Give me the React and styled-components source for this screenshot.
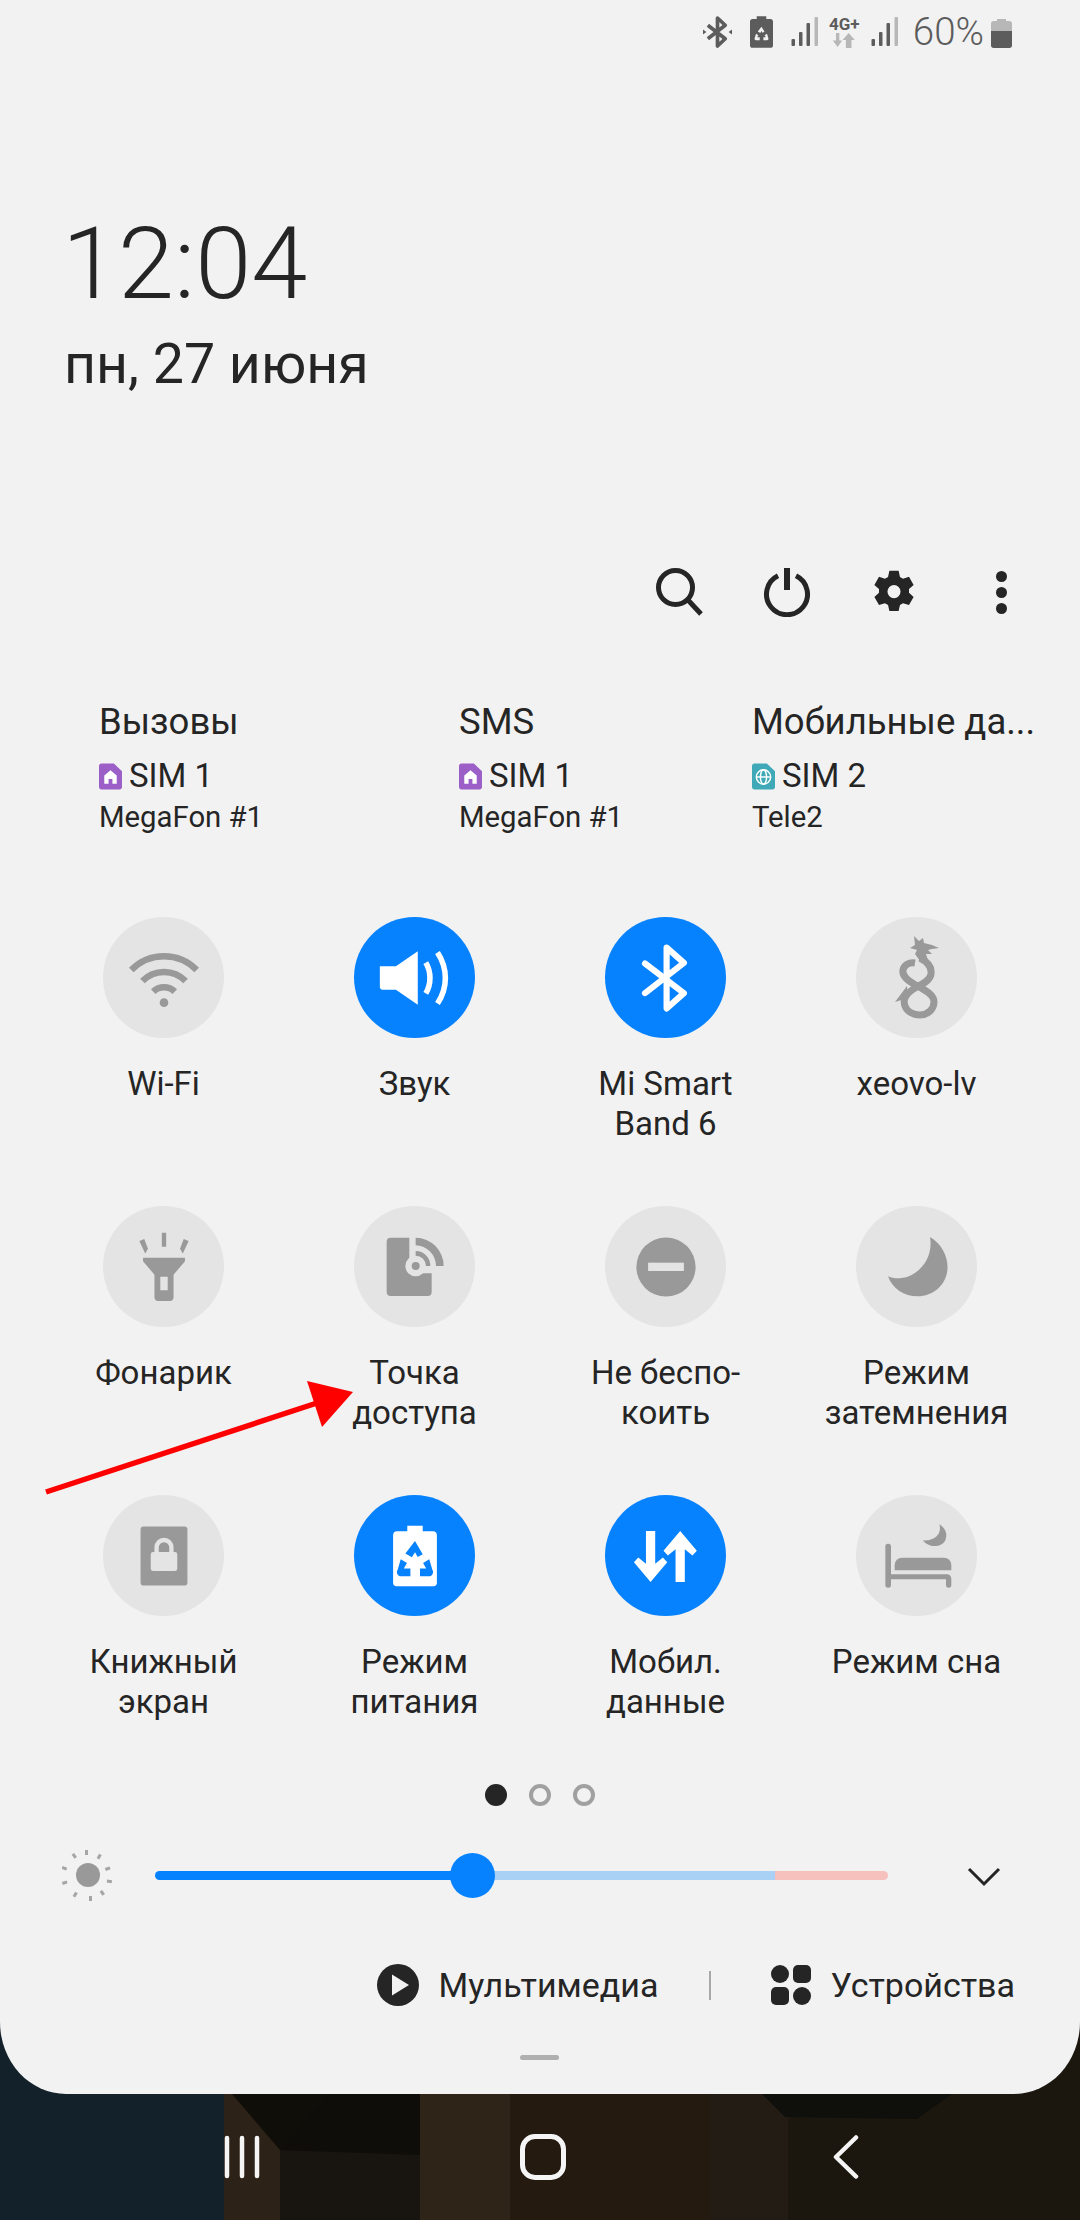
import React from 'react';
import styled, { createGlobalStyle } from 'styled-components';

const GlobalStyle = createGlobalStyle`
  html, body {
    margin: 0;
    padding: 0;
    background: #14120d;
  }
  body {
    font-family: Roboto, "Noto Sans", sans-serif;
    color: #252525;
  }
`;

const Recycle = ({ fill, transform }) => (
  <g fill={fill} transform={transform}>
    <path d="M12 7.500l2 3.400-1.300.7L12 10.400l-.8 1.300-1.700-1z" />
    <path d="M8.300 12.200l1.600 1-.8 1.400h1.700v2H8.400c-.9 0-1.400-1-.9-1.700z" />
    <path d="M15.700 12.200l-1.600 1 .8 1.400h-1.600v2h2.300c.9 0 1.400-1 .9-1.700z" />
  </g>
);

const tiles = [
  {
    lines: ['Wi-Fi'],
    icon: (
      <svg width="74" height="74" viewBox="0 0 24 24" fill="none" stroke="#999" strokeWidth="2.100">
        <path d="M1.400 9.400a14.800 14.800 0 0 1 21.200 0" />
        <path d="M5 13a9.800 9.800 0 0 1 14 0" />
        <path d="M8.500 16.400a5 5 0 0 1 7 0" />
        <circle cx="12" cy="20" r="1.400" fill="#999" stroke="none" />
      </svg>
    ),
  },
  {
    lines: ['Звук'],
    on: true,
    icon: (
      <svg width="74" height="74" viewBox="0 0 24 24" fill="none" stroke="#fff" strokeWidth="1.800">
        <path d="M.6 8.200H5.800l7.100-4.900v17.400L5.800 15.800H1.500c-.5 0-.9-.4-.9-.9z" fill="#fff" stroke="none" />
        <path d="M15.500 7c1.800 3 1.800 7 0 10" />
        <path d="M19.300 3.700c3.400 5.200 3.400 11.400 0 16.600" />
      </svg>
    ),
  },
  {
    lines: ['Mi Smart', 'Band 6'],
    on: true,
    icon: (
      <svg width="74" height="74" viewBox="0 0 24 24" fill="none" stroke="#fff" strokeWidth="2" strokeLinecap="round" strokeLinejoin="round">
        <path d="M5.200 7.300l12.600 9.600-5.600 5V2.100l5.600 5L5.200 16.900" />
      </svg>
    ),
  },
  {
    lines: ['xeovo-lv'],
    icon: (
      <svg width="44" height="83" viewBox="0 0 44 83">
        <path d="M19 0L24 5 28 2 29 7 37 9 44 12 37 13 33 14 37 18 31 18 33 24 25 25 20 18 22 14 15 12 20 9z" fill="#999" />
        <path d="M25 22C33 26 37 31 36 38C35 46 24 49 17 54C10 59 8 65 10 70C12 76 19 79 25 79C33 79 39 73 39 66C39 58 28 53 19 48C12 44 7 40 8 34C9 29 14 26 20 27" fill="none" stroke="#999" strokeWidth="7" />
        <path d="M12 50L0 66 13 62z" fill="#999" />
      </svg>
    ),
  },
  {
    lines: ['Фонарик'],
    icon: (
      <svg width="74" height="74" viewBox="0 0 24 24" fill="#999">
        <path d="M11.300 .9h1.400v4.500h-1.400zM4 3.600l1.600-.7 1.200 3.200-.9 1.500zM20 3.600l-1.600-.7-1.200 3.200.9 1.500z" />
        <path fillRule="evenodd" d="M5.200 9h13.600v1.100L15.100 14.500v7.300c0 .7-.5 1.200-1.100 1.200h-4c-.6 0-1.100-.5-1.100-1.200v-7.300L5.200 10.100zM10.800 15.200v4.300h2.400v-4.300z" />
      </svg>
    ),
  },
  {
    lines: ['Точка', 'доступа'],
    icon: (
      <svg width="60" height="62" viewBox="140 110 180 186" fill="#999">
        <path d="M157 115H213V222H280V278a12 12 0 0 1-12 12H157a12 12 0 0 1-12-12V127a12 12 0 0 1 12-12z" />
        <path d="M232 115a85 85 0 0 1 84 85h-23a62 62 0 0 0-61-62z" />
        <path d="M232 155a44 44 0 0 1 44 45h-21a22 22 0 0 0-23-23z" />
        <circle cx="232" cy="200" r="31" fill="#e4e4e4" />
        <circle cx="232" cy="200" r="12" />
      </svg>
    ),
  },
  {
    lines: ['Не беспо-', 'коить'],
    icon: (
      <svg width="74" height="74" viewBox="0 0 24 24">
        <circle cx="12" cy="12" r="9.600" fill="#999" />
        <rect x="6.200" y="10.600" width="11.600" height="2.700" fill="#e4e4e4" />
      </svg>
    ),
  },
  {
    lines: ['Режим', 'затемнения'],
    icon: (
      <svg width="74" height="74" viewBox="0 0 24 24" fill="#999">
        <path d="M16.200 2.300C20 4.500 21.900 8.500 21.900 12c0 5.500-4.400 9.500-9.700 9.500-4.400 0-8.200-2.500-9.600-6.500 1.400.6 2.900.8 4.400.6 5.500-.6 10.500-6.600 9.200-13.300z" />
      </svg>
    ),
  },
  {
    lines: ['Книжный', 'экран'],
    icon: (
      <svg width="74" height="74" viewBox="0 0 24 24">
        <rect x="4.400" y="2.400" width="15.200" height="19.200" rx="1" fill="#999" />
        <rect x="7.700" y="10.700" width="8.600" height="6.200" rx=".8" fill="#e4e4e4" />
        <path d="M9.600 11V9.200a2.400 2.400 0 0 1 4.800 0V11" fill="none" stroke="#e4e4e4" strokeWidth="1.400" />
      </svg>
    ),
  },
  {
    lines: ['Режим', 'питания'],
    on: true,
    icon: (
      <svg width="74" height="74" viewBox="0 0 24 24">
        <path d="M9.500 2.200h5v1.800h3.400c.7 0 1.200.5 1.200 1.200v15.600c0 .5-.5 1-1 1H5.900c-.5 0-1-.5-1-1V5.200c0-.7.500-1.200 1.200-1.200h3.400z" fill="#fff" />
        <Recycle fill="#0682fe" transform="translate(12 12.800) scale(1.250) translate(-12 -12)" />
      </svg>
    ),
  },
  {
    lines: ['Мобил.', 'данные'],
    on: true,
    icon: (
      <svg width="74" height="74" viewBox="0 0 24 24" fill="#fff">
        <path d="M5.500 3.900H8.500V14.500L11 12.500L12.400 14L7 20.400L1.600 14L3 12.500L5.500 14.500Z" />
        <path d="M15.100 20.400H18.100V9.800L20.600 11.800L22 10.300L16.600 3.900L11.200 10.300L12.600 11.800L15.100 9.800Z" />
      </svg>
    ),
  },
  {
    lines: ['Режим сна'],
    icon: (
      <svg width="70" height="70" viewBox="90 90 210 210" fill="#999">
        <rect x="100" y="158" width="17" height="132" rx="8" />
        <path d="M117 250H285a13 13 0 0 1 13 13V282a8 8 0 0 1-16 0V265H117z" />
        <path d="M128 238V222a22 22 0 0 1 22-22H276a22 22 0 0 1 22 22V238z" />
        <path d="M262 100C280 112 288 128 280 148C270 170 230 172 212 148C240 152 272 134 262 100z" />
      </svg>
    ),
  },
];

const SimBadge = ({ color, kind }) => (
  <SimIcon viewBox="0 0 24 27" width="23" height="27">
    <path d="M2.500 0h13L24 8v16.500c0 1.400-1.100 2.500-2.500 2.500h-19C1.100 27 0 25.900 0 24.500v-22C0 1.100 1.100 0 2.500 0z" fill={color} />
    {kind === 'home' ? (
      <path d="M12 7l6.500 5.500V21h-4.500v-5h-4v5H5.500v-8.500z" fill="#fff" />
    ) : (
      <g fill="none" stroke="#fff" strokeWidth="1.500">
        <circle cx="12" cy="14" r="7.500" />
        <ellipse cx="12" cy="14" rx="3.200" ry="7.500" />
        <path d="M4.500 14h15" />
      </g>
    )}
  </SimIcon>
);

const sims = [
  { title: 'Вызовы', sim: 'SIM 1', color: '#9b5fc7', kind: 'home', carrier: 'MegaFon #1', width: '360px' },
  { title: 'SMS', sim: 'SIM 1', color: '#9b5fc7', kind: 'home', carrier: 'MegaFon #1', width: '293px' },
  { title: 'Мобильные да...', sim: 'SIM 2', color: '#3fa9b8', kind: 'globe', carrier: 'Tele2', width: '281px' },
];

const SignalBars = () => (
  <svg width="27" height="30" viewBox="0 0 27 30">
    <rect x="0.500" y="22" width="3.500" height="7" rx="1" fill="#5c5c5c" />
    <rect x="8" y="15" width="3.500" height="14" rx="1" fill="#5c5c5c" />
    <rect x="15.500" y="6" width="3.500" height="23" rx="1" fill="#5c5c5c" />
    <rect x="23.500" y="0" width="3.500" height="29" rx="1" fill="#b7b7b7" />
  </svg>
);

export default function App() {
  return (
    <>
      <GlobalStyle />
      <Screen>
        <Panel>
          <StatusBar>
            <svg width="29" height="34" viewBox="0 0 30 34" fill="none" stroke="#5c5c5c" strokeWidth="3.800" strokeLinejoin="round">
              <path d="M5 10l18 14-8 7.500V2.500L23 10 5 24" />
              <path d="M0 14.500l3.500 2.500L0 19.500zM30 14.500l-3.500 2.500 3.500 2.500z" fill="#5c5c5c" stroke="none" />
            </svg>
            <BatterySaver viewBox="0 0 24 33" width="23" height="32">
              <path d="M7 0h10v3h4.500c1.400 0 2.500 1.100 2.500 2.500V30.500c0 1.400-1.100 2.500-2.500 2.500h-19C1.100 33 0 31.900 0 30.500V5.500C0 4.100 1.100 3 2.500 3H7z" fill="#5c5c5c" />
              <Recycle fill="#f2f2f2" transform="translate(12 18) scale(1.550) translate(-12 -12)" />
            </BatterySaver>
            <SignalBars />
            <NetType>
              <NetLabel>4G+</NetLabel>
              <svg width="24" height="15" viewBox="0 0 24 16" fill="#b7b7b7">
                <path d="M3.500 0h3.500v8h3L5.200 15 0 8h3.500zM14 16V7.500h-3.500L17 0l6.500 7.500H20V16z" />
              </svg>
            </NetType>
            <SignalBars />
            <BatteryPercent>60%</BatteryPercent>
            <BatteryIcon width="21" height="29" viewBox="0 0 21 29">
              <path d="M6 0h9v2h3.500C19.900 2 21 3.100 21 4.500V12H0V4.500C0 3.100 1.100 2 2.500 2H6z" fill="#b7b7b7" />
              <path d="M0 12h21v14.500c0 1.400-1.100 2.500-2.500 2.500h-16C1.100 29 0 27.900 0 26.500z" fill="#5c5c5c" />
            </BatteryIcon>
          </StatusBar>

          <Clock>12:04</Clock>
          <DateLine>пн, 27 июня</DateLine>

          <Actions>
            <svg width="50" height="50" viewBox="0 0 50 50" fill="none" stroke="#252525" strokeWidth="5">
              <circle cx="20.500" cy="20.500" r="17" />
              <path d="M32.500 32.500L46 47" />
            </svg>
            <svg width="50" height="50" viewBox="0 0 50 50" fill="none" stroke="#252525" strokeWidth="5">
              <path d="M16 8.800a20.500 20.500 0 1 0 18 0" />
              <path d="M25 1v22" strokeWidth="6" />
            </svg>
            <svg width="50" height="50" viewBox="-1 -1 26 26" fill="#252525">
              <path fillRule="evenodd" d="M9.600 1h4.800l.7 3.200 1.600.9 3.100-1 2.400 4.200-2.400 2.200v1.900l2.400 2.200-2.400 4.200-3.100-1-1.600.9-.7 3.200H9.600l-.7-3.200-1.600-.9-3.100 1L1.800 14.600l2.400-2.200v-1.900L1.800 8.300l2.400-4.200 3.100 1 1.600-.9zM12 8.400a3.400 3.400 0 1 0 0 6.800 3.400 3.400 0 0 0 0-6.800z" />
            </svg>
            <Dots><i /><i /><i /></Dots>
          </Actions>

          <SimRow>
            {sims.map((s) => (
              <SimCol key={s.title} $width={s.width}>
                <SimTitle>{s.title}</SimTitle>
                <SimLine>
                  <SimBadge color={s.color} kind={s.kind} />
                  {s.sim}
                </SimLine>
                <Carrier>{s.carrier}</Carrier>
              </SimCol>
            ))}
          </SimRow>

          <TileGrid>
            {tiles.map((t) => (
              <Tile key={t.lines.join(' ')}>
                <TileCircle $on={t.on}>{t.icon}</TileCircle>
                <TileLabel>
                  {t.lines.map((l) => <span key={l}>{l}</span>)}
                </TileLabel>
              </Tile>
            ))}
          </TileGrid>

          <Pager>
            <PageDot $active />
            <PageDot />
            <PageDot />
          </Pager>

          <BrightnessRow>
            <svg width="52" height="52" viewBox="0 0 52 52" fill="#999">
              <circle cx="26" cy="26" r="12" />
              <g fill="#a5a5a5">
                <rect x="23" y="1" width="3" height="5" />
                <rect x="36" y="5" width="3" height="5" transform="rotate(30 37 7)" />
                <rect x="45" y="17" width="3" height="5" transform="rotate(70 46 19)" />
                <rect x="47" y="30" width="3" height="5" transform="rotate(100 48 32)" />
                <rect x="40" y="42" width="3" height="5" transform="rotate(145 41 44)" />
                <rect x="27" y="47" width="3" height="5" />
                <rect x="12" y="43" width="3" height="5" transform="rotate(30 13 45)" />
                <rect x="2" y="31" width="3" height="5" transform="rotate(70 3 33)" />
                <rect x="2" y="17" width="3" height="5" transform="rotate(110 3 19)" />
                <rect x="12" y="5" width="3" height="5" transform="rotate(145 13 7)" />
              </g>
            </svg>
            <Slider>
              <SliderFill />
              <SliderMid />
              <SliderHot />
              <SliderThumb />
            </Slider>
            <Chevron width="34" height="20" viewBox="0 0 34 20" fill="none" stroke="#252525" strokeWidth="3">
              <path d="M2 2l15 15L32 2" />
            </Chevron>
          </BrightnessRow>

          <MediaRow>
            <MediaItem>
              <svg width="42" height="42" viewBox="0 0 42 42">
                <circle cx="21" cy="21" r="21" fill="#252525" />
                <path d="M15 10.500L32 21 15 31.500z" fill="#f2f2f2" />
              </svg>
              Мультимедиа
            </MediaItem>
            <MediaSep />
            <MediaItem>
              <DeviceGrid><i /><i /><i /><i /></DeviceGrid>
              Устройства
            </MediaItem>
          </MediaRow>

          <Handle />
        </Panel>

        <NavBar>
          <svg width="36" height="44" viewBox="0 0 36 44" stroke="#f5f5f5" strokeWidth="4.500" strokeLinecap="round">
            <path d="M3 3v38M18 3v38M33 3v38" />
          </svg>
          <HomeIcon />
          <svg width="26" height="44" viewBox="0 0 26 44" fill="none" stroke="#f5f5f5" strokeWidth="4.500" strokeLinecap="round" strokeLinejoin="round">
            <path d="M23 2.500L3 22l20 19.500" />
          </svg>
        </NavBar>

        <Wallpaper viewBox="0 -74 1080 200">
          <rect y="-74" width="1080" height="200" fill="#1a1610" />
          <rect y="-74" width="224" height="200" fill="#13212a" />
          <rect x="224" y="-74" width="56" height="200" fill="#2c2217" />
          <rect x="280" y="-74" width="140" height="200" fill="#181510" />
          <path d="M232 0h95l-47 56z" fill="#100e09" />
          <path d="M280 56L420 61V0H327z" fill="#0f0d09" />
          <rect x="420" y="-74" width="90" height="200" fill="#2f2418" />
          <rect x="510" y="-74" width="200" height="200" fill="#241a10" />
          <rect x="710" y="-74" width="78" height="200" fill="#221c14" />
          <rect x="788" y="-74" width="292" height="200" fill="#1b170f" />
          <path d="M762 0h190l-35 25-132-2z" fill="#0f0f0b" />
        </Wallpaper>

        <Arrow viewBox="0 0 320 120" width="320" height="120">
          <path d="M2 114L276 24" stroke="#fe0000" strokeWidth="5.500" fill="none" />
          <path d="M309 14L278 49 263 3z" fill="#fe0000" />
        </Arrow>
      </Screen>
    </>
  );
}

const Screen = styled.div`
  position: relative;
  width: 1080px;
  height: 2220px;
  overflow: hidden;
  display: flex;
  flex-direction: column;
`;

const Wallpaper = styled.svg`
  position: absolute;
  left: 0;
  top: 2020px;
  width: 1080px;
  height: 200px;
  z-index: 0;
`;

const Arrow = styled.svg`
  position: absolute;
  left: 44px;
  top: 1378px;
  z-index: 3;
`;

const Panel = styled.div`
  position: relative;
  z-index: 2;
  box-sizing: border-box;
  height: 2094px;
  background: #f2f2f2;
  border-radius: 0 0 66px 66px / 0 0 72px 72px;
  display: flex;
  flex-direction: column;
`;

const StatusBar = styled.div`
  display: flex;
  justify-content: flex-end;
  align-items: center;
  gap: 11px;
  height: 34px;
  padding: 15px 68px 0 0;
`;

const BatterySaver = styled.svg`
  margin: 0 7px;
`;

const NetType = styled.div`
  display: flex;
  flex-direction: column;
  align-items: center;
  width: 31px;
`;

const NetLabel = styled.span`
  font-size: 17px;
  line-height: 17px;
  font-weight: 700;
  color: #5c5c5c;
`;

const BatteryPercent = styled.span`
  font-size: 38.500px;
  line-height: 34px;
  font-weight: 300;
  color: #5c5c5c;
  margin: 0 -4px 0 4px;
`;

const BatteryIcon = styled.svg`
  margin-top: 2px;
`;

const Clock = styled.div`
  margin: 160px 0 0 62px;
  font-size: 101px;
  line-height: 110px;
  font-weight: 300;
  color: #252525;
`;

const DateLine = styled.div`
  margin: 16px 0 0 64px;
  font-size: 55.500px;
  line-height: 60px;
  color: #252525;
`;

const Actions = styled.div`
  display: flex;
  justify-content: flex-end;
  align-items: center;
  gap: 57px;
  height: 50px;
  margin-top: 172px;
  padding-right: 54px;
`;

const Dots = styled.div`
  display: flex;
  flex-direction: column;
  align-items: center;
  gap: 5px;
  width: 50px;

  i {
    display: block;
    width: 11px;
    height: 11px;
    border-radius: 50%;
    background: #252525;
  }
`;

const SimRow = styled.div`
  display: flex;
  padding-left: 99px;
  margin-top: 83px;
`;

const SimCol = styled.div`
  box-sizing: border-box;
  width: ${(p) => p.$width};
  min-width: 0;
`;

const SimTitle = styled.div`
  font-size: 36.500px;
  line-height: 44px;
  white-space: nowrap;
`;

const SimLine = styled.div`
  display: flex;
  align-items: center;
  gap: 7px;
  margin-top: 12px;
  font-size: 33px;
  line-height: 40px;
`;

const SimIcon = styled.svg`
  flex: none;
`;

const Carrier = styled.div`
  margin-top: 2px;
  font-size: 29.300px;
  line-height: 38px;
`;

const TileGrid = styled.div`
  display: grid;
  grid-template-columns: repeat(4, 251px);
  grid-auto-rows: 289px;
  padding-left: 38px;
  margin-top: 81px;
`;

const Tile = styled.div`
  display: flex;
  flex-direction: column;
  align-items: center;
`;

const TileCircle = styled.div`
  width: 121px;
  height: 121px;
  border-radius: 50%;
  background: ${(p) => (p.$on ? '#0682fe' : '#e4e4e4')};
  display: flex;
  align-items: center;
  justify-content: center;
`;

const TileLabel = styled.div`
  margin-top: 26px;
  font-size: 33px;
  line-height: 39.500px;
  text-align: center;
  white-space: nowrap;

  span {
    display: block;
  }
`;

const Pager = styled.div`
  display: flex;
  justify-content: center;
  gap: 22px;
`;

const PageDot = styled.span`
  box-sizing: border-box;
  width: 22px;
  height: 22px;
  border-radius: 50%;
  background: ${(p) => (p.$active ? '#252525' : 'transparent')};
  border: ${(p) => (p.$active ? 'none' : '4px solid #a0a0a0')};
`;

const BrightnessRow = styled.div`
  display: flex;
  align-items: center;
  height: 52px;
  margin-top: 43px;
  padding-left: 62px;
`;

const Slider = styled.div`
  position: relative;
  display: flex;
  align-items: center;
  width: 733px;
  height: 9px;
  margin: 0 79px 0 41px;
`;

const SliderFill = styled.div`
  width: 317px;
  height: 9px;
  background: #0682fe;
  border-radius: 5px 0 0 5px;
`;

const SliderMid = styled.div`
  width: 303px;
  height: 9px;
  background: #a9d0f5;
`;

const SliderHot = styled.div`
  flex: 1;
  height: 9px;
  background: #f6c0bd;
  border-radius: 0 5px 5px 0;
`;

const SliderThumb = styled.div`
  position: absolute;
  left: 295px;
  top: -18px;
  width: 45px;
  height: 45px;
  border-radius: 50%;
  background: #0682fe;
`;

const Chevron = styled.svg`
  margin-top: 3px;
`;

const MediaRow = styled.div`
  display: flex;
  justify-content: flex-end;
  align-items: center;
  height: 42px;
  margin-top: 63px;
  padding-right: 65px;
`;

const MediaItem = styled.div`
  display: flex;
  align-items: center;
  gap: 19px;
  font-size: 34px;
  line-height: 42px;
`;

const MediaSep = styled.div`
  width: 2px;
  height: 29px;
  background: #a8a8a8;
  margin: 0 60px 0 51px;
`;

const DeviceGrid = styled.div`
  display: grid;
  grid-template-columns: 18px 18px;
  gap: 4px;

  i {
    display: block;
    width: 18px;
    height: 18px;
    background: #252525;
    border-radius: 50%;
  }

  i:nth-child(2),
  i:nth-child(3) {
    border-radius: 5px;
  }
`;

const Handle = styled.div`
  position: absolute;
  left: 520px;
  top: 2055px;
  width: 39px;
  height: 5px;
  border-radius: 3px;
  background: #b0b0b0;
`;

const NavBar = styled.div`
  position: relative;
  z-index: 1;
  height: 126px;
  display: grid;
  grid-template-columns: 484px 118px 488px;
  justify-items: center;
  align-items: center;
`;

const HomeIcon = styled.div`
  box-sizing: border-box;
  width: 46px;
  height: 46px;
  border: 5px solid #f5f5f5;
  border-radius: 15px;
`;
